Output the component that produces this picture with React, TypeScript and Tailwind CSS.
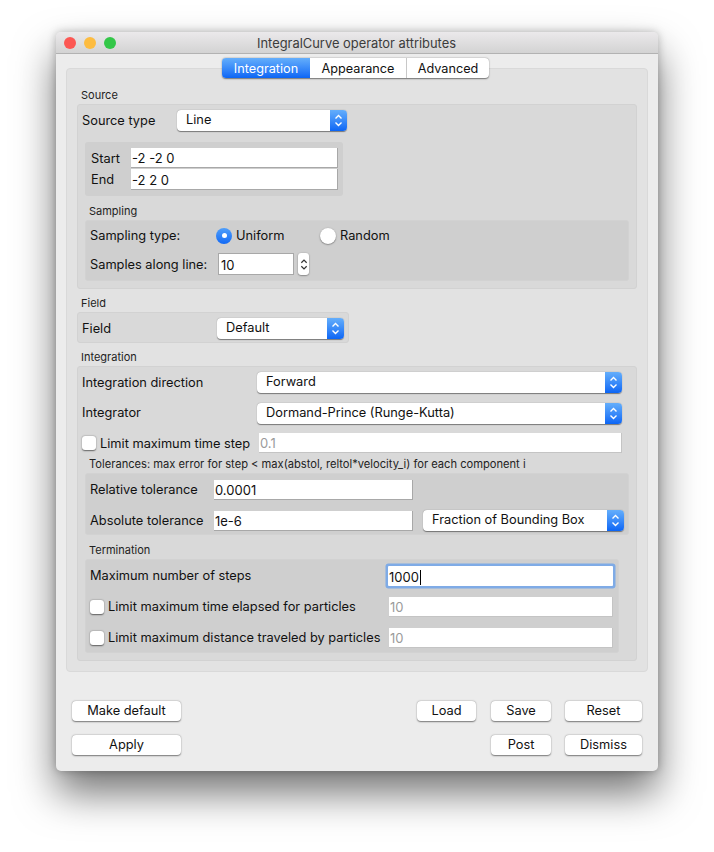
import type { ReactNode } from 'react'

const font = 'font-["Inter","Liberation_Sans",sans-serif]'

function Chevrons({ className }: { className: string }) {
  return (
    <svg viewBox="0 0 9 15" className={className} fill="none" stroke="currentColor" strokeWidth="1.4">
      <path d="M1.5 5.5 L4.5 2.5 L7.5 5.5" />
      <path d="M1.5 9.5 L4.5 12.5 L7.5 9.5" />
    </svg>
  )
}

function Select({ value, className }: { value: string; className: string }) {
  return (
    <div className={`flex h-[21px] items-center rounded-[4px] bg-white shadow-[0_0.5px_1px_rgba(0,0,0,0.45)] ${className}`}>
      <span className="flex-1 pl-[9px] text-[12.8px] leading-[17px] text-[#111] -translate-y-[1px]">{value}</span>
      <span className="flex h-full w-[17px] items-center justify-center rounded-r-[4px] bg-gradient-to-b from-[#64aefb] to-[#0a65f5] text-white">
        <Chevrons className="h-[15px] w-[9px]" />
      </span>
    </div>
  )
}

function Input({ value, className, disabled }: { value: string; className: string; disabled?: boolean }) {
  return (
    <div
      className={`flex items-center bg-white pl-[1px] pt-[2px] text-[13px] leading-[17px] border-r border-b ${
        disabled ? 'border-[#c4c4c4] text-[#9b9b9b]' : 'border-[#a8a8a8] text-[#111]'
      } ${className}`}
    >
      {value}
    </div>
  )
}

function Checkbox() {
  return <span className="h-[14px] w-[14px] shrink-0 rounded-[3px] bg-white shadow-[0_0.5px_1.5px_rgba(0,0,0,0.55)]" />
}

function Group({ title, titleClass, className, children }: { title: string; titleClass?: string; className: string; children: ReactNode }) {
  return (
    <div>
      <div className={`flex h-[16px] items-center whitespace-nowrap pb-[2px] pl-[4px] leading-[14px] text-[#222] ${titleClass ?? 'text-[11px]'}`}>{title}</div>
      <div className={`rounded-[3px] border border-[#d2d2d2] ${className}`}>{children}</div>
    </div>
  )
}

function Button({ label, className }: { label: string; className: string }) {
  return (
    <button className={`h-[20px] rounded-[4px] bg-white pb-[2px] text-[12.8px] leading-[17px] text-[#111] shadow-[0_0.5px_1.5px_rgba(0,0,0,0.5)] ${className}`}>
      {label}
    </button>
  )
}

function Radio({ on }: { on?: boolean }) {
  if (on) {
    return (
      <span className="flex h-[16px] w-[16px] items-center justify-center rounded-full bg-gradient-to-b from-[#4f9efa] to-[#1169f5]">
        <span className="h-[5px] w-[5px] rounded-full bg-white" />
      </span>
    )
  }
  return <span className="h-[16px] w-[16px] rounded-full bg-white shadow-[0_0.5px_1.5px_rgba(0,0,0,0.55)]" />
}

export default function App() {
  return (
    <div className={`h-[852px] w-[714px] overflow-hidden bg-white pl-[56px] pt-[32px] ${font}`}>
      <div className="h-[739px] w-[602px] rounded-[5px] bg-[#ececec] shadow-[0_22px_40px_rgba(0,0,0,0.55),0_0_8px_rgba(0,0,0,0.25)]">
        {/* Title bar */}
        <div className="flex h-[22px] items-center rounded-t-[5px] border-b border-[#b2b2b2] bg-gradient-to-b from-[#ebe9eb] to-[#d3d3d3] pl-[8px]">
          <div className="flex gap-[8px]">
            <span className="h-[12px] w-[12px] rounded-full bg-[#fc5753]" />
            <span className="h-[12px] w-[12px] rounded-full bg-[#fdbc40]" />
            <span className="h-[12px] w-[12px] rounded-full bg-[#33c748]" />
          </div>
          <span className="ml-[141px] translate-y-[1px] text-[12.9px] leading-[17px] text-[#3c3c3c]">IntegralCurve operator attributes</span>
        </div>

        {/* Tabs */}
        <div className="relative z-10 ml-[166px] mt-[4px] flex h-[20px] w-[267px] rounded-[4px] bg-white text-[12.7px] leading-[17px] text-[#111] shadow-[0_0.5px_1.5px_rgba(0,0,0,0.5)]">
          <span className="flex w-[88px] items-center justify-center rounded-l-[4px] bg-gradient-to-b from-[#64aefb] to-[#0a65f5] text-white">Integration</span>
          <span className="flex w-[97px] items-center justify-center border-r border-[#c8c8c8]">Appearance</span>
          <span className="flex w-[82px] items-center justify-center">Advanced</span>
        </div>

        {/* Tab pane */}
        <div className="mx-[10px] -mt-[10px] h-[604px] rounded-[4px] border border-[#d9d9d9] bg-[#e2e2e2] pl-[10px] pt-[19px] text-[12.8px] text-[#111]">
          <Group title="Source" className="h-[185px] w-[560px] bg-[#d9d9d9] pl-[4px] pt-[5px]">
            <div className="flex h-[21px] items-center">
              <span className="w-[95px]">Source type</span>
              <Select value="Line" className="w-[170px]" />
            </div>
            <div className="ml-[3px] mt-[11px] h-[54px] w-[258px] rounded-[3px] bg-[#cfcfcf] pl-[6px] pt-[6px]">
              <div className="flex h-[20px] items-center">
                <span className="w-[40px] pt-[1px]">Start</span>
                <Input value="-2 -2 0" className="h-[20px] w-[207px]" />
              </div>
              <div className="mt-[1px] flex h-[21px] items-center">
                <span className="w-[40px]">End</span>
                <Input value="-2 2 0" className="h-[21px] w-[207px]" />
              </div>
            </div>
            <div className="ml-[3px] mt-[8px]">
              <Group title="Sampling" className="h-[61px] w-[544px] bg-[#cfcfcf] pl-[4px] pt-[4px]">
                <div className="flex h-[21px] items-center">
                  <span className="w-[126px]">Sampling type:</span>
                  <Radio on />
                  <span className="ml-[4px] w-[84px]">Uniform</span>
                  <Radio />
                  <span className="ml-[4px]">Random</span>
                </div>
                <div className="mt-[7px] flex h-[22px] items-center">
                  <span className="w-[128px] pt-[2px]">Samples along line:</span>
                  <Input value="10" className="h-[22px] w-[76px] border-l border-t pl-[2px]" />
                  <span className="ml-[4px] flex h-[22px] w-[11px] items-center justify-center rounded-[3px] bg-white text-[#333] shadow-[0_0.5px_1.5px_rgba(0,0,0,0.55)]">
                    <Chevrons className="h-[15px] w-[8px]" />
                  </span>
                </div>
              </Group>
            </div>
          </Group>

          <div className="mt-[7px]">
            <Group title="Field" className="flex h-[31px] w-[272px] items-center bg-[#d9d9d9] pl-[4px] pt-[2px]">
              <span className="w-[135px]">Field</span>
              <Select value="Default" className="w-[127px]" />
            </Group>
          </div>

          <div className="mt-[7px]">
            <Group title="Integration" className="h-[295px] w-[560px] bg-[#d9d9d9] pl-[4px] pt-[5px]">
              <div className="flex h-[21px] items-center">
                <span className="w-[175px]">Integration direction</span>
                <Select value="Forward" className="w-[365px]" />
              </div>
              <div className="mt-[10px] flex h-[21px] items-center">
                <span className="w-[175px] pb-[2px]">Integrator</span>
                <Select value="Dormand-Prince (Runge-Kutta)" className="w-[365px]" />
              </div>
              <div className="mt-[9px] flex h-[20px] items-center">
                <Checkbox />
                <span className="ml-[4px] w-[159px] pt-[2px]">Limit maximum time step</span>
                <Input value="0.1" disabled className="h-[20px] w-[363px]" />
              </div>
              <div className="ml-[3px] mt-[4px]">
                <Group
                  title="Tolerances: max error for step < max(abstol, reltol*velocity_i) for each component i"
                  titleClass="text-[11.15px]"
                  className="h-[62px] w-[544px] bg-[#cfcfcf] pl-[4px] pt-[6px]"
                >
                  <div className="flex h-[20px] items-center">
                    <span className="w-[124px]">Relative tolerance</span>
                    <Input value="0.0001" className="h-[20px] w-[199px]" />
                  </div>
                  <div className="mt-[10px] flex h-[21px] items-center">
                    <span className="w-[124px]">Absolute tolerance</span>
                    <Input value="1e-6" className="h-[20px] w-[199px]" />
                    <Select value="Fraction of Bounding Box" className="ml-[10px] w-[201px]" />
                  </div>
                </Group>
              </div>
              <div className="ml-[3px] mt-[8px]">
                <Group title="Termination" className="h-[94px] w-[534px] bg-[#cfcfcf] pl-[4px] pt-[6px]">
                  <div className="flex h-[20px] items-center">
                    <span className="w-[298px]">Maximum number of steps</span>
                    <div className="flex h-[20px] w-[225px] items-center rounded-[1px] bg-white pl-[1px] pt-[2px] text-[13px] leading-[17px] shadow-[0_0_0_2.5px_#7fabe6]">
                      1000
                      <span className="ml-[1px] h-[15px] w-px bg-black" />
                    </div>
                  </div>
                  <div className="mt-[11px] flex h-[20px] items-center">
                    <Checkbox />
                    <span className="ml-[4px] w-[281px]">Limit maximum time elapsed for particles</span>
                    <Input value="10" disabled className="h-[20px] w-[224px]" />
                  </div>
                  <div className="mt-[11px] flex h-[20px] items-center">
                    <Checkbox />
                    <span className="ml-[4px] w-[281px] whitespace-nowrap">Limit maximum distance traveled by particles</span>
                    <Input value="10" disabled className="h-[20px] w-[224px]" />
                  </div>
                </Group>
              </div>
            </Group>
          </div>
        </div>

        {/* Bottom buttons */}
        <div className="mt-[29px] flex px-[16px]">
          <Button label="Make default" className="w-[109px]" />
          <Button label="Load" className="ml-[236px] w-[59px]" />
          <Button label="Save" className="ml-[15px] w-[60px]" />
          <Button label="Reset" className="ml-[14px] w-[77px]" />
        </div>
        <div className="mt-[14px] flex px-[16px]">
          <Button label="Apply" className="w-[109px]" />
          <Button label="Post" className="ml-[310px] w-[60px]" />
          <Button label="Dismiss" className="ml-[14px] w-[77px]" />
        </div>
      </div>
    </div>
  )
}
